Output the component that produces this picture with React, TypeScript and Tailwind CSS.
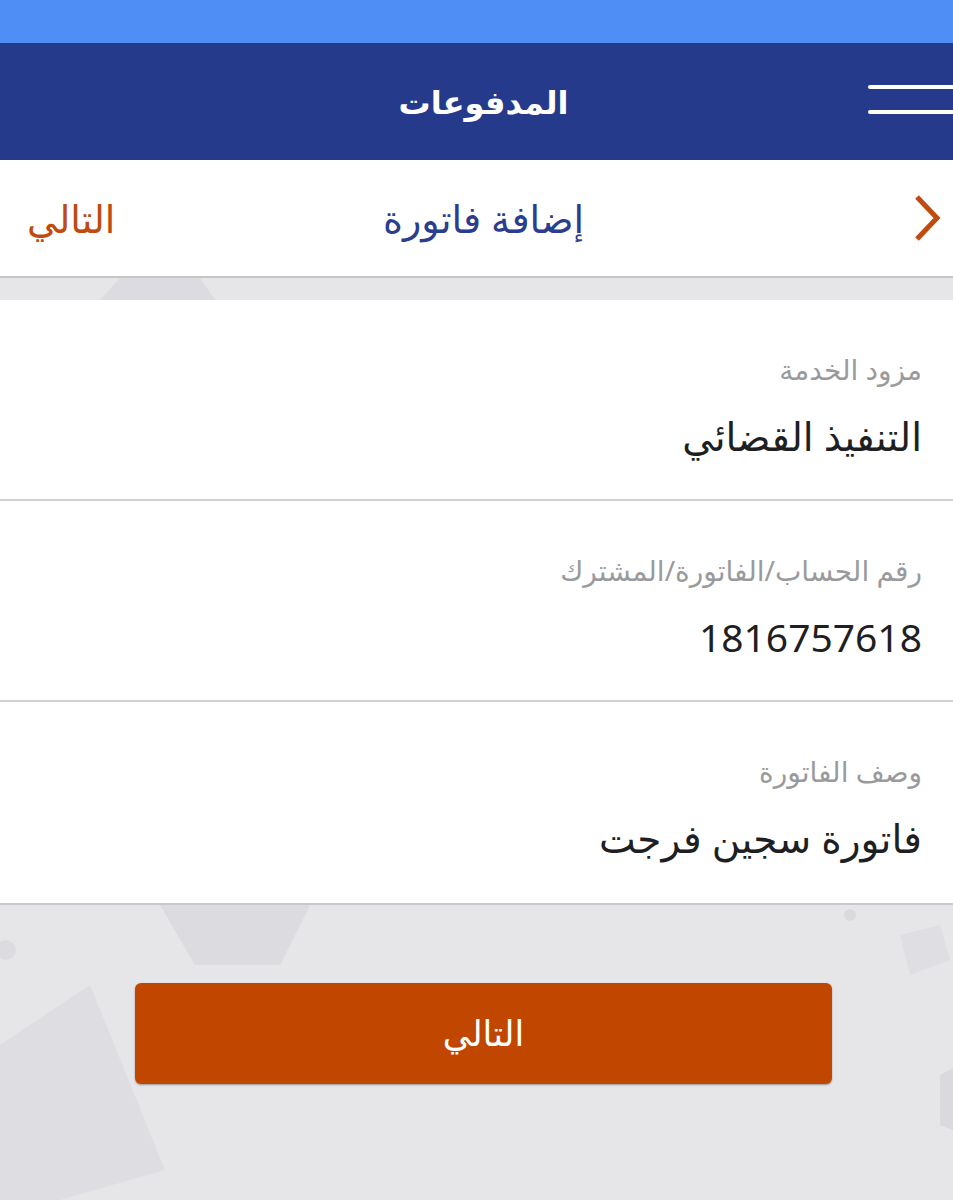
import React from 'react'

const FONT = "font-['Noto_Sans','DejaVu_Sans',sans-serif]"

const FIELDS = [
  { label: 'مزود الخدمة', value: 'التنفيذ القضائي' },
  { label: 'رقم الحساب/الفاتورة/المشترك', value: '1816757618' },
  { label: 'وصف الفاتورة', value: 'فاتورة سجين فرجت' },
]

function Field({ label, value, last }: { label: string; value: string; last?: boolean }) {
  return (
    <div
      className={`h-[201px] flex flex-col pt-[55px] pr-[31px] ${
        last ? '' : 'border-b-2 border-[#d2d2d4]'
      }`}
    >
      <p className="text-[28px] leading-none text-[#9a9a9c] mb-[33px]">{label}</p>
      <p className="text-[39px] leading-none text-[#1e1f22]">{value}</p>
    </div>
  )
}

export default function App() {
  return (
    <div dir="rtl" className={`w-[953px] h-[1200px] relative overflow-hidden bg-[#e6e6e8] ${FONT}`}>
      {/* Faint hexagon background */}
      <svg className="absolute inset-0 w-full h-full" viewBox="0 0 953 1200" aria-hidden>
        <polygon points="120,278 200,278 215,300 100,300" fill="#dcdce0" />
        <polygon points="160,905 310,905 280,965 195,965" fill="#dcdce0" />
        <polygon points="0,1045 90,985 165,1170 60,1200 0,1200" fill="#dedee2" />
        <polygon points="900,935 940,925 950,960 910,975" fill="#dfdfe3" />
        <circle cx="850" cy="915" r="6" fill="#dadade" />
        <circle cx="6" cy="950" r="10" fill="#dcdce0" />
        <polygon points="940,1075 953,1068 953,1130 940,1125" fill="#dadade" />
      </svg>

      <div className="relative">
        {/* Status bar */}
        <div className="h-[43px] bg-[#4f8ef5]" />

        {/* Header */}
        <header className="h-[117px] bg-[#253a8b] flex items-center justify-center pl-[14px] relative">
          <h1 className="text-white text-[32px] font-bold">المدفوعات</h1>
          <div dir="ltr" className="absolute left-[868px] top-[42px] w-[85px] flex flex-col gap-[21px]">
            <span className="block h-[4px] bg-white rounded-l-full" />
            <span className="block h-[4px] bg-white rounded-l-full" />
          </div>
        </header>

        {/* Sub-header */}
        <div className="h-[118px] bg-white border-b-2 border-[#c6c6c8] flex items-center justify-between px-[10px] relative">
          <svg width="34" height="50" viewBox="0 0 34 50" className="mr-[-2px]">
            <path d="M6 4 L26 25 L6 46" fill="none" stroke="#c04a0f" strokeWidth="5" />
          </svg>
          <span className="absolute inset-x-0 pl-[14px] text-center text-[38px] text-[#2a3d8f] font-medium pointer-events-none">
            إضافة فاتورة
          </span>
          <span className="text-[38px] text-[#c04a0f] ml-[17px]">التالي</span>
        </div>

        <div className="h-[22px]" />

        {/* Form */}
        <div className="bg-white border-b-2 border-[#c9c9cc]">
          {FIELDS.map((f, i) => (
            <Field key={f.label} label={f.label} value={f.value} last={i === FIELDS.length - 1} />
          ))}
        </div>

        {/* Next button */}
        <div className="flex justify-center pl-[14px] pt-[78px]">
          <button
            type="button"
            className="w-[697px] h-[101px] rounded-[6px] bg-[#c14700] text-white text-[35px] shadow-[0_1px_2px_rgba(0,0,0,0.35)]"
          >
            التالي
          </button>
        </div>
      </div>
    </div>
  )
}
